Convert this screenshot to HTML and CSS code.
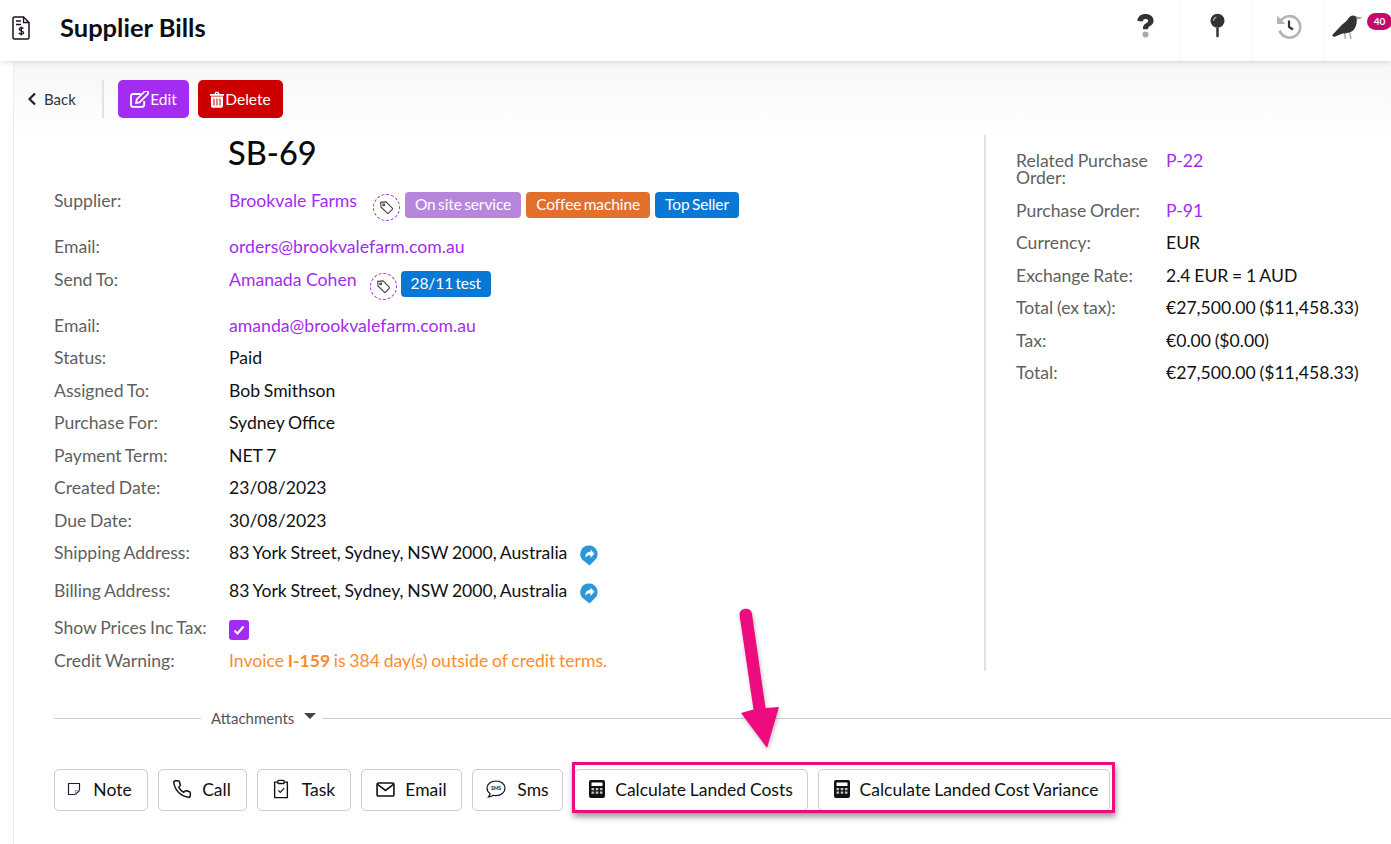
FILE: index.html
```html
<!DOCTYPE html>
<html lang="en">
<head>
<meta charset="utf-8">
<title>Supplier Bills</title>
<link rel="stylesheet" href="styles.css">
</head>
<body>
<header class="topbar">
  <svg class="doc-icon" viewBox="0 0 18 24" fill="none" stroke="#1c1320" stroke-width="1.5"><path d="M2.500 1h9l5.500 5.500v15a1.500 1.500 0 0 1-1.500 1.500h-13a1.500 1.500 0 0 1-1.500-1.500v-19a1.500 1.500 0 0 1 1.500-1.500z"/><path d="M11.500 1v5.500h5.500M4 5h5M4 8.500h5" stroke-width="1.300"/><path d="M11.500 12.500c-.6-1-3.800-1.300-4.300.4-.5 2.300 4.600 1.500 4.400 3.900-.2 1.700-3.700 1.600-4.700.2M9.300 10.500v9" stroke-width="1.300"/></svg>
  <h1 class="page-title">Supplier Bills</h1>
  <nav class="top-icons">
    <div class="top-cell first-cell">
      <svg class="ic-help" viewBox="0 0 20 26"><path d="M1.500 8.200C1.800 3.800 5.200 1 10 1c4.800 0 8.500 2.800 8.500 7 0 3-1.700 4.300-3.600 5.500-1.500.9-2.200 1.500-2.200 3v.5H7.300v-1.200c0-2.700 1.300-3.900 3-4.900 1.500-.9 2.500-1.500 2.500-2.800 0-1.300-1.200-2-2.800-2-1.700 0-2.900.9-3 2.600z" fill="#333"/><circle cx="10" cy="22.500" r="3.200" fill="#aaa"/></svg>
    </div>
    <div class="top-cell">
      <svg class="ic-pin" viewBox="0 0 16 26"><circle cx="8" cy="8" r="7.500" fill="#333"/><path d="M3.800 8a4.300 4.300 0 0 1 3-4" stroke="#bbb" fill="none" stroke-width="1.200"/><rect x="6.700" y="15" width="2.600" height="10.500" rx="1" fill="#333"/></svg>
    </div>
    <div class="top-cell">
      <svg class="ic-history" viewBox="0 0 26 26" fill="none"><path d="M4.300 8.500A10.700 10.700 0 1 1 3.500 17.500" stroke="#b5b5b5" stroke-width="2.600"/><path d="M1 2.500v8.500h8.500z" fill="#b5b5b5"/><path d="M13 7.500v6.500l4 2.500" stroke="#333" stroke-width="2.200"/></svg>
    </div>
    <div class="top-cell crow-cell">
      <svg class="ic-crow" viewBox="0 0 34 28"><path d="M14 20l.8 7M19 20l1.700 7" stroke="#aaa" stroke-width="1.500"/><path d="M1 23L11 12.500c2.500-2.500 5-3.500 7-7C19.500 2.800 23 1.500 25.500 3.500L32 5l-5.500 1.800c.5 4-1 9-4 11.700-3 2.500-7.500 2.800-10.500 2.700L3 25z" fill="#333"/><path d="M26 3.800L32 5l-5.500 1.800z" fill="#aaa"/></svg>
      <span class="badge">40</span>
    </div>
  </nav>
</header>

<div class="page">
  <div class="toolbar">
    <a class="back"><svg viewBox="0 0 10 14" class="chev" fill="none" stroke="#222" stroke-width="2.200"><path d="M8 1.500L2.500 7 8 12.500"/></svg>Back</a>
    <span class="tool-sep"></span>
    <button class="btn-solid btn-edit"><svg class="btn-ic" viewBox="0 0 20 18" fill="none" stroke="#fff" stroke-width="2"><path d="M15 10.500v4a2.300 2.300 0 0 1-2.300 2.300H3.300A2.300 2.300 0 0 1 1 14.500V5.500a2.300 2.300 0 0 1 2.300-2.300h8"/><path d="M7 9l-.6 3.600 3.600-.6 8.500-8.500a1.800 1.800 0 0 0-3-3z" stroke-width="1.800"/></svg>Edit</button>
    <button class="btn-solid btn-delete"><svg class="btn-ic trash" viewBox="0 0 14 17"><path d="M0 3h14v1.800H0zM4.500 3l1-2.300h3L9.500 3H8l-.5-1h-1L6 3z" fill="#fff"/><path d="M1 5.500h12V15a1.800 1.800 0 0 1-1.800 1.800H2.800A1.800 1.800 0 0 1 1 15z" fill="#fff"/><path d="M4 7.500v7M7 7.500v7M10 7.500v7" stroke="#c00" stroke-width="1"/></svg>Delete</button>
  </div>

  <div class="details">
    <section class="main-col">
      <h2 class="doc-no">SB-69</h2>
      <div class="row tall"><span class="lab">Supplier:</span><div class="val val-flex"><a class="lnk">Brookvale Farms</a>
        <span class="tag-ring ring-a"><svg viewBox="0 0 16 16" fill="none" stroke="#444" stroke-width="1.200"><path d="M1.800 2.500l5.700-.5 6.700 6.700a1 1 0 0 1 0 1.400l-4 4a1 1 0 0 1-1.400 0L2.100 7.400z"/><circle cx="5" cy="5" r="1"/></svg></span>
        <span class="tag tag-lilac">On site service</span><span class="tag tag-orange">Coffee machine</span><span class="tag tag-blue">Top Seller</span></div></div>
      <div class="row"><span class="lab">Email:</span><a class="val lnk">orders@brookvalefarm.com.au</a></div>
      <div class="row tall"><span class="lab">Send To:</span><div class="val val-flex"><a class="lnk">Amanada Cohen</a>
        <span class="tag-ring ring-b"><svg viewBox="0 0 16 16" fill="none" stroke="#444" stroke-width="1.200"><path d="M1.800 2.500l5.700-.5 6.700 6.700a1 1 0 0 1 0 1.400l-4 4a1 1 0 0 1-1.400 0L2.100 7.400z"/><circle cx="5" cy="5" r="1"/></svg></span>
        <span class="tag tag-blue">28/11 test</span></div></div>
      <div class="row"><span class="lab">Email:</span><a class="val lnk">amanda@brookvalefarm.com.au</a></div>
      <div class="row"><span class="lab">Status:</span><span class="val">Paid</span></div>
      <div class="row"><span class="lab">Assigned To:</span><span class="val">Bob Smithson</span></div>
      <div class="row"><span class="lab">Purchase For:</span><span class="val">Sydney Office</span></div>
      <div class="row"><span class="lab">Payment Term:</span><span class="val">NET 7</span></div>
      <div class="row"><span class="lab">Created Date:</span><span class="val">23/08/2023</span></div>
      <div class="row"><span class="lab">Due Date:</span><span class="val">30/08/2023</span></div>
      <div class="row addr"><span class="lab">Shipping Address:</span><div class="val val-addr">83 York Street, Sydney, NSW 2000, Australia<svg class="map-ic" viewBox="0 0 18 21"><path d="M9 .5a8.500 8.500 0 0 1 5.500 15L9.500 20.500 4 16A8.500 8.500 0 0 1 9 .5z" fill="#2a97d8"/><path d="M5.500 12.500c-.5-3.500 1.500-5.500 5-5.500V4.500l4 4.200-4 4.200v-2.700c-2 0-3.700.5-5 2.300z" fill="#fff"/></svg></div></div>
      <div class="row addr addr-b"><span class="lab">Billing Address:</span><div class="val val-addr">83 York Street, Sydney, NSW 2000, Australia<svg class="map-ic" viewBox="0 0 18 21"><path d="M9 .5a8.500 8.500 0 0 1 5.500 15L9.500 20.500 4 16A8.500 8.500 0 0 1 9 .5z" fill="#2a97d8"/><path d="M5.500 12.500c-.5-3.500 1.500-5.500 5-5.500V4.500l4 4.200-4 4.200v-2.700c-2 0-3.700.5-5 2.300z" fill="#fff"/></svg></div></div>
      <div class="row"><span class="lab">Show Prices Inc Tax:</span><div class="val val-center"><span class="check"><svg viewBox="0 0 12 10" fill="none" stroke="#fff" stroke-width="2.200"><path d="M1.500 5.500l3 3 6-7"/></svg></span></div></div>
      <div class="row"><span class="lab">Credit Warning:</span><span class="val warn">Invoice <b>I-159</b> is 384 day(s) outside of credit terms.</span></div>
    </section>
    <aside class="side-col">
      <div class="srow first"><span class="slab">Related Purchase Order:</span><a class="sval slnk">P-22</a></div>
      <div class="srow"><span class="slab">Purchase Order:</span><a class="sval slnk">P-91</a></div>
      <div class="srow"><span class="slab">Currency:</span><span class="sval">EUR</span></div>
      <div class="srow"><span class="slab">Exchange Rate:</span><span class="sval">2.4 EUR = 1 AUD</span></div>
      <div class="srow"><span class="slab">Total (ex tax):</span><span class="sval">€27,500.00 ($11,458.33)</span></div>
      <div class="srow"><span class="slab">Tax:</span><span class="sval">€0.00 ($0.00)</span></div>
      <div class="srow"><span class="slab">Total:</span><span class="sval">€27,500.00 ($11,458.33)</span></div>
    </aside>
  </div>

  <div class="attach"><span class="attach-label">Attachments</span><span class="caret"></span></div>

  <div class="actions">
    <button class="act act-note"><svg viewBox="0 0 16 16" fill="none" stroke="#2a1a40" stroke-width="1.200" class="ai-note"><path d="M2.500 2.500h11v7l-4 4h-7z"/><path d="M9.500 13.500v-4h4" stroke="#a98"/></svg>Note</button>
    <button class="act act-call"><svg viewBox="0 0 24 24" fill="none" stroke="#111" stroke-width="1.800" class="ai ai-call"><path d="M22 16.920v3a2 2 0 0 1-2.180 2 19.790 19.790 0 0 1-8.630-3.070 19.500 19.500 0 0 1-6-6 19.790 19.790 0 0 1-3.070-8.670A2 2 0 0 1 4.110 2h3a2 2 0 0 1 2 1.720 12.840 12.840 0 0 0 .7 2.810 2 2 0 0 1-.45 2.110L8.090 9.910a16 16 0 0 0 6 6l1.270-1.270a2 2 0 0 1 2.110-.45 12.840 12.840 0 0 0 2.810.7A2 2 0 0 1 22 16.920z"/></svg>Call</button>
    <button class="act act-task"><svg viewBox="0 0 18 22" fill="none" stroke="#111" stroke-width="1.500" class="ai"><path d="M5.500 3.500H2v17h14v-17h-3.500"/><rect x="5.500" y="1.500" width="7" height="3.500" rx="1" fill="#fff"/><path d="M6 12.500l2.200 2.200L12.500 10" stroke-width="1.200"/></svg>Task</button>
    <button class="act act-email"><svg viewBox="0 0 20 16" fill="none" stroke="#111" stroke-width="1.700" class="ai-mail"><rect x="1" y="1" width="18" height="14" rx="1.500"/><path d="M1.500 2.500L10 9l8.500-6.500"/></svg>Email</button>
    <button class="act act-sms"><svg viewBox="0 0 20 20" fill="none" stroke="#111" stroke-width="1.200" class="ai"><path d="M10 2c5 0 9 3.100 9 7.300s-4 7.300-9 7.300c-1 0-1.900-.1-2.800-.4-1.300 1-2.800 1.700-4.700 1.800.8-.9 1.400-2 1.600-3.300C2.200 13.300 1 11.400 1 9.300 1 5.100 5 2 10 2z"/><text x="10" y="11" class="sms-txt">SMS</text></svg>Sms</button>
    <button class="act act-calc"><svg viewBox="0 0 16 18" class="ai-calc"><use href="#calc"/></svg>Calculate Landed Costs</button>
    <button class="act act-var"><svg viewBox="0 0 16 18" class="ai-calc"><use href="#calc"/></svg>Calculate Landed Cost Variance</button>
  </div>
</div>

<svg class="defs" width="0" height="0"><defs><g id="calc"><rect x="0" y="0" width="16" height="18" rx="2" fill="#111"/><rect x="2.500" y="2.500" width="11" height="3.500" fill="#fff"/><path d="M2.500 8h2.600v2.200H2.500zM6.700 8h2.600v2.200H6.700zM10.900 8h2.600v2.200h-2.600zM2.500 11.500h2.600v2.200H2.500zM6.700 11.500h2.600v2.200H6.700zM10.900 11.500h2.600v2.200h-2.600z" fill="#fff" opacity=".75"/></g></defs></svg>

<div class="highlight"></div>
<svg class="arrow" viewBox="0 0 50 150"><path d="M4.500 10C4.500 2 16.500 2 17 9L30.500 103 44 102 32 143 6 108 18.500 104.500z" fill="#ee0a7f"/></svg>
</body>
</html>
```

FILE: styles.css
```css
* { box-sizing: border-box; }
html, body { margin: 0; padding: 0; height: 100%; overflow: hidden; }
body { font-family: Lato, "Liberation Sans", sans-serif; font-size: 17.600px; word-spacing: -0.800px; color: #111; background: #fff; position: relative; }
h1, h2 { margin: 0; }
a { text-decoration: none; }
button { font-family: inherit; cursor: pointer; }

.topbar { height: 61px; display: flex; align-items: center; background: #fff; box-shadow: 0 1px 6px rgba(0,0,0,.14); position: relative; z-index: 2; }
.doc-icon { width: 18px; height: 24px; margin-left: 12px; margin-top: -6px; }
.page-title { margin-left: 30px; margin-top: -7px; font-size: 25.500px; font-weight: 700; color: #0d0d14; word-spacing: 0; }
.top-icons { margin-left: auto; display: flex; height: 61px; }
.top-cell { width: 72px; height: 61px; display: flex; align-items: flex-start; justify-content: center; border-left: 1px solid #f5f5f5; padding-top: 13px; }
.first-cell { border-left: 0; }
.ic-help { width: 19px; height: 25px; margin-left: 2px; }
.ic-pin { width: 15px; height: 25px; margin-left: 2px; }
.ic-history { width: 26px; height: 26px; }
.crow-cell { width: 67px; justify-content: flex-start; padding-left: 6px; position: relative; }
.ic-crow { width: 33px; height: 27px; }
.badge { position: absolute; left: 42px; top: 13px; width: 25px; height: 17px; border-radius: 9px; background: #c5086b; color: #fff; font-size: 10px; font-weight: 700; text-align: center; line-height: 17px; }

.page { margin-left: 13px; border-left: 1px solid #ececec; min-height: 783px; background: #fff; }
.toolbar { height: 74px; display: flex; align-items: center; padding: 2px 0 0 13px; background: linear-gradient(#f6f6f6, #fff); }
.back { display: flex; align-items: center; color: #333; font-size: 15px; width: 75px; }
.chev { width: 10px; height: 14px; margin-right: 7px; }
.tool-sep { width: 2px; height: 38px; background: #e2e2e2; }
.btn-solid { height: 38px; border: 0; border-radius: 5px; color: #fff; font-size: 15.500px; display: flex; align-items: center; justify-content: center; padding: 0; }
.btn-ic { width: 19px; height: 17px; margin-right: 1px; }
.trash { width: 14px; height: 17px; }
.btn-edit { width: 71px; background: #a32cf0; margin-left: 14px; }
.btn-delete { width: 85px; background: #cc0000; margin-left: 9px; }

.details { display: flex; height: 536px; }
.main-col { width: 972px; padding-left: 40px; border-right: 2px solid #e4e2de; height: 536px; }
.doc-no { font-size: 32.500px; font-weight: 500; line-height: 36px; padding-left: 174px; margin-bottom: 14px; color: #0a0a0a; }
.row { display: flex; height: 32.500px; line-height: 32.500px; }
.row.tall { height: 46px; }
.row.addr { height: 38px; }
.row.addr-b { height: 37px; }
.lab { width: 175px; flex: none; color: #5f5f5f; }
.val { color: #111; }
.val.lnk, .val-flex .lnk { color: #a32cf0; word-spacing: 0; font-size: 17.650px; }
.val-flex { display: flex; align-items: flex-start; }
.val-center { display: flex; align-items: center; height: 32.500px; }
.val-addr { display: flex; }
.map-ic { width: 18px; height: 21px; margin: 8px 0 0 13px; }
.tag-ring { width: 27px; height: 27px; border: 1px dashed #a32cf0; border-radius: 50%; display: flex; align-items: center; justify-content: center; margin-top: 9px; flex: none; }
.tag-ring svg { width: 15px; height: 15px; }
.ring-a { margin-left: 16px; margin-right: 5px; }
.ring-b { margin-left: 13px; margin-right: 4px; }
.tag { height: 26px; line-height: 25px; margin-top: 7px; border-radius: 4px; color: #fff; font-size: 15.500px; word-spacing: -1.500px; letter-spacing: -0.100px; padding: 0 10px; margin-right: 5px; white-space: nowrap; }
.tag-lilac { background: #b785dc; }
.tag-orange { background: #e26f2c; }
.tag-blue { background: #0878d4; }
.check { width: 20px; height: 20px; border-radius: 3px; background: #a32cf0; display: flex; align-items: center; justify-content: center; margin-top: 3px; }
.check svg { width: 12px; height: 10px; }
.warn { color: #fb8c2e; }
.warn b { font-weight: 700; }

.side-col { padding: 8.600px 0 0 30px; flex: 1; }
.srow { display: flex; height: 32.500px; line-height: 32.500px; }
.srow.first { height: 51px; line-height: 17px; padding-top: 8px; }
.slab { width: 150px; flex: none; color: #5f5f5f; }
.sval { color: #111; }
.slnk { color: #a32cf0; }

.attach { height: 0; margin-top: 47px; margin-left: 40px; border-top: 1px solid #ccc; position: relative; }
.attach-label { position: absolute; left: 147px; top: -11px; width: 121px; height: 22px; background: #fff; padding-left: 10px; color: #555; font-size: 15px; line-height: 20px; }
.caret { position: absolute; left: 250px; top: -6px; border-left: 6px solid transparent; border-right: 6px solid transparent; border-top: 6px solid #444; }

.actions { display: flex; margin: 50px 0 0 40px; }
.act { height: 42px; background: #fff; border: 1px solid #ccc; border-radius: 5px; color: #111; font-size: 17.500px; word-spacing: -0.700px; display: flex; align-items: center; justify-content: center; padding: 0 0 2px; margin-right: 10px; flex: none; }
.ai { width: 20px; height: 20px; margin-right: 11px; }
.ai-call { margin-right: 10px; }
.ai-note { width: 16px; height: 16px; margin-right: 11px; }
.ai-mail { width: 19px; height: 15px; margin-right: 10px; }
.ai-calc { width: 16px; height: 18px; margin-right: 10px; }
.sms-txt { font-family: Lato, sans-serif; font-size: 5px; font-weight: 700; text-anchor: middle; fill: #111; stroke: none; }
.act-note { width: 94px; padding-right: 4px; }
.act-call { width: 89px; padding-right: 2px; }
.act-task { width: 94px; padding-right: 2px; }
.act-email { width: 101px; }
.act-sms { width: 91px; margin-right: 11px; }
.act-calc { width: 234px; }
.act-var { width: 292px; margin-right: 0; padding-left: 4px; }
.defs { position: absolute; }

.highlight { position: absolute; left: 572px; top: 762px; width: 543px; height: 51px; border: 3px solid #ee0a7f; box-shadow: 1px 4px 6px rgba(0,0,0,.4); pointer-events: none; }
.arrow { position: absolute; left: 735px; top: 605px; width: 50px; height: 150px; filter: drop-shadow(1px 2px 2px rgba(0,0,0,.25)); }
```
